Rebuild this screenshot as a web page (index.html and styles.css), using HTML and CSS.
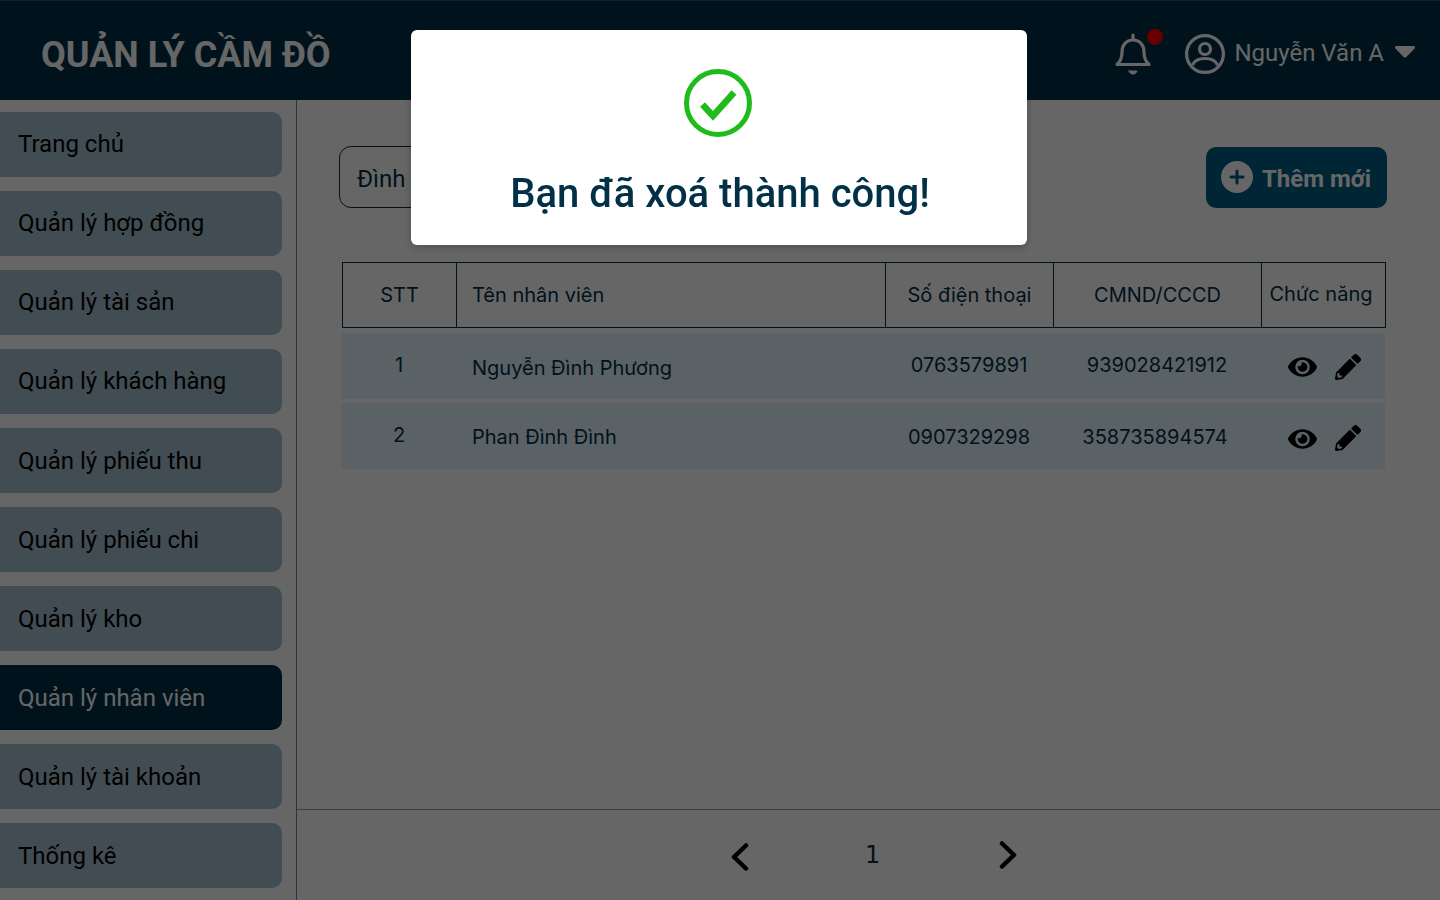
FILE: index.html
```html
<!DOCTYPE html>
<html lang="vi">
<head>
<meta charset="utf-8">
<title>Quản lý cầm đồ</title>
<link rel="stylesheet" href="styles.css">
</head>
<body>
<div class="app">
  <header class="topbar">
    <h1 class="brand">QUẢN LÝ CẦM ĐỒ</h1>
    <div class="account">
      <div class="bell-wrap">
        <svg class="bell" viewBox="0 0 36 42" fill="none" stroke="#fff" stroke-width="3.2" stroke-linejoin="round" stroke-linecap="round">
          <path d="M2 31.5c3.5-3 5-6 5-12.500C7 12.500 11 7 18 7s11 5.500 11 12c0 6.500 1.500 9.500 5 12.500z"/>
          <path d="M18 2v4"/>
          <path d="M14 38h8c-.6 2-2 3-4 3s-3.400-1-4-3z" fill="#fff" stroke-width="1"/>
        </svg>
        <span class="dot"></span>
      </div>
      <svg class="avatar" viewBox="0 0 40 40" fill="none" stroke="#fff" stroke-width="3.200">
        <circle cx="20" cy="20" r="18.400"/>
        <circle cx="20" cy="15" r="5.500"/>
        <path d="M7.500 31c2-4.500 6-6.500 12.500-6.500S30.500 26.500 32.500 31"/>
      </svg>
      <span class="username">Nguyễn Văn A</span>
      <svg class="caret" viewBox="0 0 20 12"><path d="M1.500 0h17c1.300 0 2 1.500 1.100 2.500l-8.500 8.800c-.6.600-1.600.6-2.200 0L.4 2.500C-.5 1.500.2 0 1.500 0z" fill="#fff"/></svg>
    </div>
  </header>
  <div class="body-row">
    <nav class="sidebar">
      <a class="nav-item">Trang chủ</a>
      <a class="nav-item">Quản lý hợp đồng</a>
      <a class="nav-item">Quản lý tài sản</a>
      <a class="nav-item">Quản lý khách hàng</a>
      <a class="nav-item">Quản lý phiếu thu</a>
      <a class="nav-item">Quản lý phiếu chi</a>
      <a class="nav-item">Quản lý kho</a>
      <a class="nav-item active">Quản lý nhân viên</a>
      <a class="nav-item">Quản lý tài khoản</a>
      <a class="nav-item">Thống kê</a>
    </nav>
    <main class="main">
      <div class="content">
        <div class="toolbar">
          <div class="search">Đình</div>
          <button class="add-btn">
            <svg class="plus" viewBox="0 0 32 32"><circle cx="16" cy="16" r="16" fill="#fff"/><path d="M16 10v12M10 16h12" stroke="#025c85" stroke-width="3" stroke-linecap="round"/></svg>
            <span class="add-label">Thêm mới</span>
          </button>
        </div>
        <div class="table">
          <div class="thead">
            <div class="th">STT</div>
            <div class="th th-left">Tên nhân viên</div>
            <div class="th">Số điện thoại</div>
            <div class="th">CMND/CCCD</div>
            <div class="th th-fn">Chức năng</div>
          </div>
          <div class="tr first">
            <div class="td up">1</div>
            <div class="td td-left">Nguyễn Đình Phương</div>
            <div class="td up">0763579891</div>
            <div class="td up">939028421912</div>
            <div class="td actions">
              <svg class="eye" viewBox="0 0 576 512"><path d="M572.52 241.4C518.29 135.59 410.93 64 288 64S57.68 135.64 3.48 241.41a32.35 32.35 0 0 0 0 29.19C57.71 376.41 165.07 448 288 448s230.32-71.64 284.52-177.41a32.35 32.35 0 0 0 0-29.19zM288 400a144 144 0 1 1 144-144 143.93 143.93 0 0 1-144 144zm0-240a95.31 95.31 0 0 0-25.31 3.79 47.85 47.85 0 0 1-66.9 66.9A95.78 95.78 0 1 0 288 160z"/></svg>
              <svg class="pen" viewBox="0 0 512 512"><path d="M497.9 142.1l-46.1 46.1c-4.7 4.7-12.3 4.7-17 0l-111-111c-4.7-4.7-4.7-12.3 0-17l46.1-46.1c18.7-18.7 49.1-18.7 67.9 0l60.1 60.1c18.8 18.7 18.8 49.1 0 67.9zM284.2 99.8L21.6 362.4.4 483.9c-2.900 16.400 11.400 30.600 27.800 27.800l121.500-21.300 262.600-262.600c4.700-4.700 4.700-12.300 0-17l-111-111c-4.800-4.700-12.400-4.700-17.100 0zM88 424h48v36.300l-64.500 11.300-31.100-31.100L51.700 376H88v48z"/></svg>
            </div>
          </div>
          <div class="tr second">
            <div class="td up">2</div>
            <div class="td td-left">Phan Đình Đình</div>
            <div class="td">0907329298</div>
            <div class="td shift">358735894574</div>
            <div class="td actions">
              <svg class="eye" viewBox="0 0 576 512"><path d="M572.52 241.4C518.29 135.59 410.93 64 288 64S57.68 135.64 3.48 241.41a32.35 32.35 0 0 0 0 29.19C57.71 376.41 165.07 448 288 448s230.32-71.64 284.52-177.41a32.35 32.35 0 0 0 0-29.19zM288 400a144 144 0 1 1 144-144 143.93 143.93 0 0 1-144 144zm0-240a95.31 95.31 0 0 0-25.31 3.79 47.85 47.85 0 0 1-66.9 66.9A95.78 95.78 0 1 0 288 160z"/></svg>
              <svg class="pen" viewBox="0 0 512 512"><path d="M497.9 142.1l-46.1 46.1c-4.7 4.7-12.3 4.7-17 0l-111-111c-4.7-4.7-4.7-12.3 0-17l46.1-46.1c18.7-18.7 49.1-18.7 67.9 0l60.1 60.1c18.8 18.7 18.8 49.1 0 67.9zM284.2 99.8L21.6 362.4.4 483.9c-2.900 16.400 11.400 30.600 27.800 27.800l121.500-21.300 262.600-262.600c4.700-4.700 4.700-12.300 0-17l-111-111c-4.800-4.700-12.400-4.700-17.100 0zM88 424h48v36.300l-64.500 11.300-31.100-31.100L51.700 376H88v48z"/></svg>
            </div>
          </div>
        </div>
      </div>
      <footer class="pager">
        <svg class="chev chev-prev" viewBox="0 0 18 28" fill="none" stroke="#000" stroke-width="4.500" stroke-linecap="round" stroke-linejoin="round"><path d="M15 2.500 3 14l12 11.500"/></svg>
        <span class="page-num">1</span>
        <svg class="chev chev-next" viewBox="0 0 18 28" fill="none" stroke="#000" stroke-width="4.500" stroke-linecap="round" stroke-linejoin="round"><path d="M3 2.500 15 14 3 25.500"/></svg>
      </footer>
    </main>
  </div>
</div>
<div class="overlay">
  <div class="modal">
    <svg class="ok" viewBox="0 0 68 68" fill="none" stroke="#1fbb1a">
      <circle cx="34" cy="34" r="31.500" stroke-width="5"/>
      <path d="M18.500 35.500 29 47 50 23.500" stroke-width="6.500"/>
    </svg>
    <p class="modal-text">Bạn đã xoá thành công!</p>
  </div>
</div>
</body>
</html>
```

FILE: styles.css
```css
* { box-sizing: border-box; }
html, body { margin: 0; height: 100%; overflow: hidden; }
body { background: #fff; font-family: "Roboto", sans-serif; color: #023047; }

.app { height: 900px; display: flex; flex-direction: column; }

.topbar {
  height: 100px;
  flex: none;
  background: #023047;
  border-top: 1px solid #0a5a78;
  display: flex;
  align-items: center;
  justify-content: space-between;
  padding: 0 25px 0 41px;
  color: #fff;
}
.brand { margin: 0; font-size: 36px; font-weight: 700; line-height: 1; padding-top: 9px; }
.account { display: flex; align-items: center; padding-top: 6px; }
.bell-wrap { position: relative; width: 36px; height: 42px; margin-right: 34px; }
.bell { display: block; width: 36px; height: 42px; }
.dot { position: absolute; left: 32px; top: -4px; width: 16px; height: 16px; border-radius: 50%; background: #ff0000; }
.avatar { display: block; width: 40px; height: 40px; margin-right: 9px; }
.username { font-size: 24px; line-height: 28px; margin-top: -2px; }
.caret { display: block; width: 20px; height: 12px; margin-left: 11px; margin-top: -4px; }

.body-row { flex: 1; display: flex; min-height: 0; }

.sidebar {
  width: 297px;
  flex: none;
  border-right: 1px solid #5d8aa3;
  padding: 12px 14px 0 0;
  display: flex;
  flex-direction: column;
  gap: 14px;
}
.nav-item {
  height: 65px;
  flex: none;
  background: #a3c0cf;
  border-radius: 0 10px 10px 0;
  color: #000;
  font-size: 24px;
  display: flex;
  align-items: center;
  padding-left: 18px;
}
.nav-item:nth-child(-n+4) { padding-bottom: 2px; }
.nav-item.active { background: #023047; color: #fff; }

.main { flex: 1; display: flex; flex-direction: column; min-width: 0; }
.content { flex: 1; padding: 46px 53px 0 42px; }

.toolbar { display: flex; justify-content: space-between; align-items: flex-start; }
.search {
  width: 500px;
  height: 62px;
  border: 1px solid #023047;
  border-radius: 12px;
  display: flex;
  align-items: center;
  padding: 4px 0 0 17px;
  font-size: 24px;
}
.add-btn {
  width: 181px;
  height: 61px;
  margin-top: 1px;
  border: 0;
  border-radius: 10px;
  background: #025c85;
  color: #fff;
  display: flex;
  align-items: center;
  gap: 9px;
  padding: 0 0 0 15px;
  font: 700 24px "Roboto", sans-serif;
}
.add-label { padding-top: 2px; }
.plus { width: 32px; height: 32px; display: block; flex: none; margin-top: -2px; }

.table { margin: 54px 0 0 3px; width: 1044px; font-family: "Inter", sans-serif; font-size: 20px; color: #023047; }
.thead {
  display: grid;
  grid-template-columns: 113px 429px 168px 208px 124px;
  height: 66px;
  border: 1px solid #023047;
}
.th { display: flex; align-items: center; justify-content: center; border-left: 1px solid #023047; }
.th:first-child { border-left: 0; }
.th-left { justify-content: flex-start; padding-left: 15px; }
.th-fn { padding: 0 5px 3px 0; }

.tr {
  display: grid;
  grid-template-columns: 114px 429px 168px 208px 124px;
  height: 66px;
  width: 1043px;
  margin-top: 4px;
  background: #e2f4fd;
}
.tr.first { margin-top: 5px; }
.td { display: flex; align-items: center; justify-content: center; padding-top: 2px; }
.td.up { padding-top: 0; padding-bottom: 3px; }
.td-left { justify-content: flex-start; padding: 4px 0 0 16px; }
.second .td-left { padding-top: 2px; }
.td.shift { padding-right: 4px; }
.actions { gap: 18px; padding: 2px 4px 0 6px; color: #000; }
.second .actions { padding-top: 5px; }
.eye { width: 29px; height: 26px; display: block; fill: #000; }
.pen { width: 26px; height: 26px; display: block; fill: #000; }
.second .pen { margin-top: -2px; }

.pager {
  height: 91px;
  flex: none;
  border-top: 1px solid #8aa3b2;
  display: flex;
  align-items: center;
  padding-left: 434px;
}
.chev { width: 18px; height: 28px; display: block; }
.chev-prev { margin-top: 3px; }
.chev-next { margin-left: 116px; }
.page-num { font-family: "DejaVu Sans", sans-serif; font-size: 24px; margin-left: 116px; width: 18px; }

.overlay {
  position: fixed;
  inset: 0;
  background: rgba(0, 0, 0, 0.6);
}
.modal {
  position: absolute;
  left: 411px;
  top: 30px;
  width: 616px;
  height: 215px;
  background: #fff;
  border-radius: 6px;
  box-shadow: 0 2px 8px rgba(0, 0, 0, 0.25);
  display: flex;
  flex-direction: column;
  align-items: center;
  padding-top: 39px;
}
.ok { width: 68px; height: 68px; display: block; margin-left: -2px; }
.modal-text { margin: 31px 0 0 2px; font-size: 40px; line-height: 52px; font-weight: 500; color: #023047; }
```
